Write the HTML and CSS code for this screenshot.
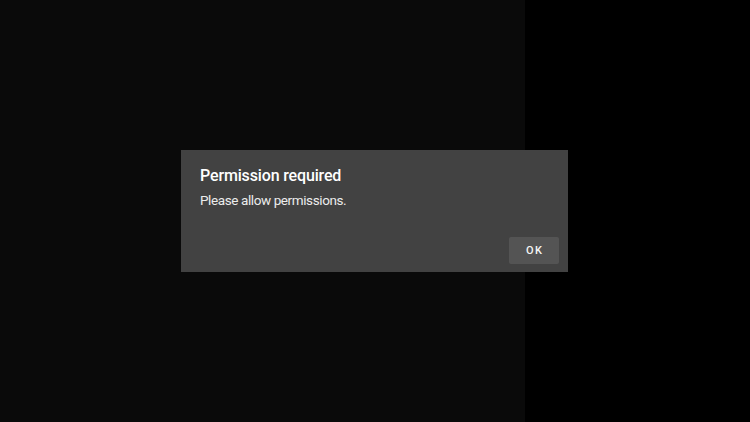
FILE: index.html
```html
<!DOCTYPE html>
<html>
<head>
<meta charset="utf-8">
<link rel="stylesheet" href="styles.css">
</head>
<body>
<div class="screen">
  <div class="pane-left"></div>
  <div class="pane-right"></div>
  <div class="dialog">
    <div class="dialog-title">Permission required</div>
    <div class="dialog-message">Please allow permissions.</div>
    <div class="dialog-actions">
      <button class="btn-ok">OK</button>
    </div>
  </div>
</div>
</body>
</html>
```
FILE: styles.css
```css
html, body {
  margin: 0;
  padding: 0;
  background: #000;
}
.screen {
  position: relative;
  width: 750px;
  height: 422px;
  display: flex;
  font-family: Roboto, "Noto Sans", sans-serif;
  overflow: hidden;
}
.pane-left {
  width: 525px;
  background: #0a0a0a;
}
.pane-right {
  flex: 1;
  background: #000;
}
.dialog {
  position: absolute;
  left: 181px;
  top: 150px;
  width: 387px;
  height: 122px;
  box-sizing: border-box;
  background: #424242;
  padding: 14.5px 9px 8px 19px;
  display: flex;
  flex-direction: column;
}
.dialog-title {
  color: #fff;
  font-size: 16px;
  font-weight: 500;
  line-height: 22px;
  letter-spacing: -0.15px;
}
.dialog-message {
  color: #ececec;
  font-size: 13.5px;
  line-height: 18px;
  letter-spacing: -0.4px;
  margin-top: 4px;
}
.dialog-actions {
  margin-top: auto;
  display: flex;
  justify-content: flex-end;
}
.btn-ok {
  width: 50px;
  height: 27px;
  border: none;
  border-radius: 2px;
  background: #545454;
  color: #f4f4f4;
  font-family: Roboto, "Noto Sans", sans-serif;
  font-size: 11px;
  font-weight: 500;
  letter-spacing: 1.6px;
  padding: 0 0 0 1.6px;
}
```
